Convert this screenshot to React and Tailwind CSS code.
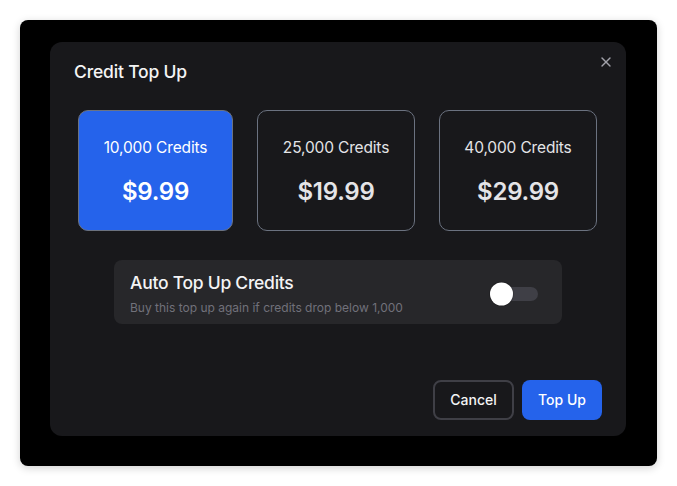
import React, { useState } from "react";
import { X } from "lucide-react";

const plans = [
  { credits: "10,000 Credits", price: "$9.99", w: "w-[155px]" },
  { credits: "25,000 Credits", price: "$19.99", w: "w-[158px]" },
  { credits: "40,000 Credits", price: "$29.99", w: "w-[158px]" },
];

export default function App() {
  const [selected, setSelected] = useState(0);
  const [auto, setAuto] = useState(false);

  return (
    <div className="w-[677px] h-[486px] bg-white p-5 font-['Inter',sans-serif]">
      <div className="h-[446px] bg-black rounded-lg shadow-[0_2px_8px_rgba(0,0,0,0.18)] pl-[30px] pr-[31px] pt-[22px] pb-[30px]">
        <div className="relative h-[394px] bg-[#18181b] rounded-xl pt-4 pb-4">
          <button className="absolute right-3 top-[12px] text-[#a1a1aa]">
            <X size={16} strokeWidth={2} />
          </button>

          <h2 className="pl-6 text-[17.5px] leading-7 font-medium tracking-[-0.01em] text-[#f4f4f5]">
            Credit Top Up
          </h2>

          <div className="mt-6 px-7 flex gap-6">
            {plans.map((p, i) => (
              <button
                key={p.credits}
                onClick={() => setSelected(i)}
                className={`${p.w} h-[121px] pt-[2px] rounded-[10px] border flex flex-col items-center justify-center gap-4 ${
                  selected === i
                    ? "bg-[#2563eb] border-[#6b7280] text-white"
                    : "bg-[#18181b] border-[#6b7280] text-[#e4e4e7]"
                }`}
              >
                <span className="text-[15.5px] leading-6 tracking-[-0.01em]">{p.credits}</span>
                <span className="text-2xl leading-8 font-semibold tracking-[-0.01em]">{p.price}</span>
              </button>
            ))}
          </div>

          <div className="mt-[29px] mx-auto w-[448px] h-16 bg-[#27272a] rounded-lg pl-4 pr-6 flex items-center justify-between">
            <div className="mt-[2px] flex flex-col">
              <span className="text-[17.5px] leading-6 font-medium tracking-[-0.015em] text-[#f4f4f5]">
                Auto Top Up Credits
              </span>
              <span className="mt-[5px] text-xs leading-4 text-[#71717a]">
                Buy this top up again if credits drop below 1,000
              </span>
            </div>
            <button
              onClick={() => setAuto(!auto)}
              className={`relative w-[48px] h-[14px] rounded-full mt-[4px] ${auto ? "bg-[#2563eb]" : "bg-[#3f3f46]"}`}
            >
              <span
                className={`absolute top-1/2 -translate-y-1/2 w-[23px] h-[23px] rounded-full bg-white shadow-[0_0_0_1px_rgba(0,0,0,0.15)] ${
                  auto ? "left-[25px]" : "left-0"
                }`}
              />
            </button>
          </div>

          <div className="mt-14 pr-6 flex justify-end gap-2">
            <button className="w-[81px] h-10 rounded-lg border-2 border-[#3f3f46] text-sm font-medium text-[#f4f4f5]">
              Cancel
            </button>
            <button className="w-[80px] h-10 rounded-lg bg-[#2563eb] text-sm font-medium text-white">
              Top Up
            </button>
          </div>
        </div>
      </div>
    </div>
  );
}
